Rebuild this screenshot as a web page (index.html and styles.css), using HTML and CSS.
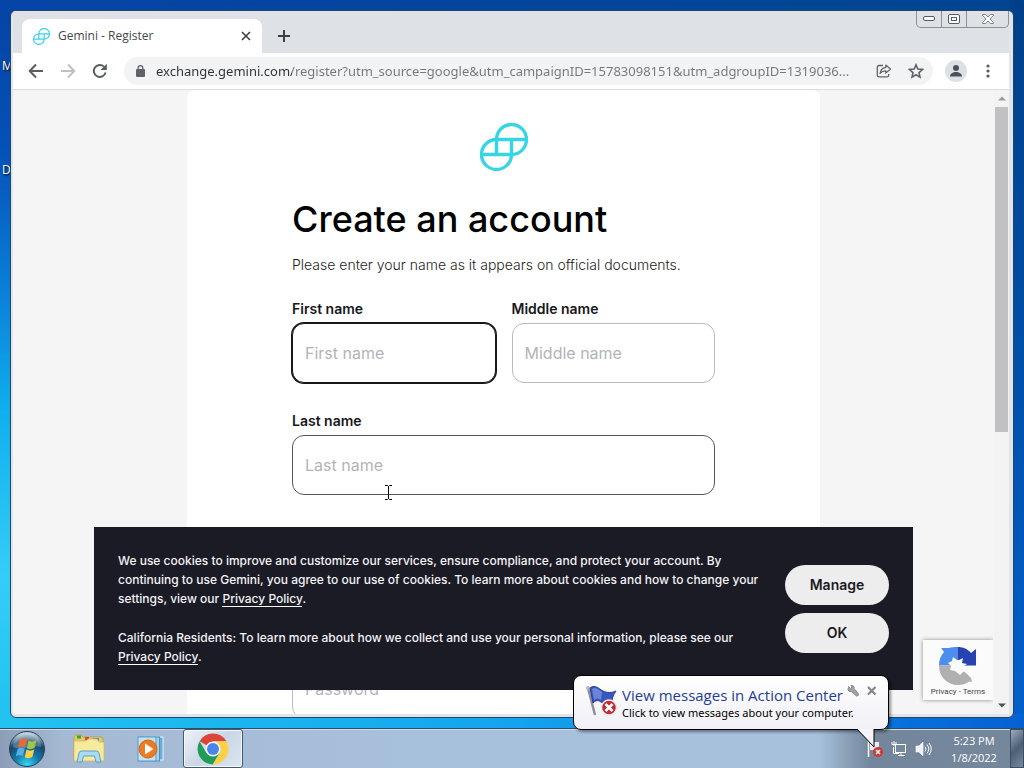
FILE: index.html
```html
<!DOCTYPE html>
<html lang="en">
<head>
<meta charset="utf-8">
<title>Gemini - Register</title>
<link rel="stylesheet" href="styles.css">
</head>
<body>
<div class="desktop">
  <span class="shortcut shortcut-first">M</span>
  <span class="shortcut shortcut-second">D</span>

  <div class="window">
    <header class="tabstrip">
      <div class="tab">
        <svg class="favicon" viewBox="0 0 48 48" aria-hidden="true"><use href="#gemini-mark"/></svg>
        <span class="tab-title">Gemini - Register</span>
        <button class="icon-button" aria-label="Close tab"><svg width="10" height="10" viewBox="0 0 10 10"><path d="M1 1l8 8M9 1l-8 8" stroke="#3c4043" stroke-width="1.6"/></svg></button>
      </div>
      <button class="icon-button new-tab" aria-label="New tab"><svg width="12" height="12" viewBox="0 0 12 12"><path d="M6 0v12M0 6h12" stroke="#3c4043" stroke-width="2"/></svg></button>
      <div class="window-controls">
        <button aria-label="Minimize"><svg width="13" height="6" viewBox="0 0 13 6"><rect x=".5" y=".5" width="11" height="4" rx="1.5" fill="#fff" stroke="#555b66"/></svg></button>
        <button aria-label="Restore"><svg width="12" height="10" viewBox="0 0 12 10"><rect x=".5" y=".5" width="11" height="9" rx="1.5" fill="#fff" stroke="#555b66"/><rect x="3.5" y="3.5" width="5" height="3" fill="#fff" stroke="#555b66"/></svg></button>
        <button class="close" aria-label="Close"><svg width="12" height="10" viewBox="0 0 12 10"><path d="M.7.5h3L6 3 8.300.5h3v1L8 5l3.300 3.500v1h-3L6 7 3.700 9.500h-3v-1L4 5 .7 1.500z" fill="#fff" stroke="#6b707a" stroke-width=".9"/></svg></button>
      </div>
    </header>

    <nav class="toolbar">
      <button class="icon-button" aria-label="Back"><svg width="16" height="16" viewBox="0 0 16 16"><path d="M15 8H2M8 1.500L1.700 8 8 14.500" fill="none" stroke="#5a5d61" stroke-width="2"/></svg></button>
      <button class="icon-button" aria-label="Forward"><svg width="16" height="16" viewBox="0 0 16 16"><path d="M1 8h13M8 1.500L14.300 8 8 14.500" fill="none" stroke="#bfc1c4" stroke-width="2"/></svg></button>
      <button class="icon-button" aria-label="Reload"><svg width="16" height="16" viewBox="0 0 16 16"><path d="M13.600 9.500A6 6 0 1 1 12 3.600" fill="none" stroke="#5a5d61" stroke-width="2"/><path d="M14.800.8V7H8.600z" fill="#5a5d61"/></svg></button>
      <div class="omnibox">
        <svg class="lock" width="10" height="12" viewBox="0 0 10 12" aria-hidden="true"><rect x="1" y="4" width="9" height="8" rx="1" fill="#5f6368"/><path d="M3.200 5V3a2.300 2.300 0 0 1 4.600 0v2" fill="none" stroke="#5f6368" stroke-width="1.3"/></svg>
        <input class="url" type="text" aria-label="Address" value="exchange.gemini.com/register?utm_source=google&amp;utm_campaignID=15783098151&amp;utm_adgroupID=1319036...">
        <button class="icon-button" aria-label="Share"><svg width="16" height="14" viewBox="0 0 16 14"><path d="M7 1.500H3A1.700 1.700 0 0 0 1.300 3.200v8A1.700 1.700 0 0 0 3 12.900h8a1.700 1.700 0 0 0 1.700-1.700V10" fill="none" stroke="#5f6368" stroke-width="1.3"/><path d="M9.800 1l4.700 4-4.700 4V6.800C7.300 6.700 5.500 7.500 4 9.500c.5-3 2.300-5.500 5.800-6.100z" fill="none" stroke="#5f6368" stroke-width="1.2" stroke-linejoin="round"/></svg></button>
        <button class="icon-button" aria-label="Bookmark"><svg width="16" height="16" viewBox="0 0 16 16"><path d="M8 1.800l1.800 4.300 4.700.4-3.500 3.100 1 4.600L8 11.800l-4 2.400 1-4.600-3.500-3.100 4.700-.4z" fill="none" stroke="#5f6368" stroke-width="1.6"/></svg></button>
      </div>
      <button class="icon-button profile" aria-label="Profile"><svg width="22" height="22" viewBox="0 0 22 22"><circle cx="11" cy="11" r="11" fill="#dde1e6"/><circle cx="11" cy="8" r="3" fill="#4a5059"/><path d="M5 16.500c0-3 3-4.500 6-4.500s6 1.500 6 4.500z" fill="#4a5059"/></svg></button>
      <button class="icon-button" aria-label="Menu"><svg width="4" height="14" viewBox="0 0 4 14" fill="#55585c"><circle cx="2" cy="2" r="1.6"/><circle cx="2" cy="7" r="1.6"/><circle cx="2" cy="12" r="1.6"/></svg></button>
    </nav>

    <div class="viewport">
      <main class="page">
        <form class="card">
          <svg class="logo" viewBox="0 0 48 48" role="img" aria-label="Gemini">
            <g id="gemini-mark" fill="none" stroke="#36d5e6" stroke-width="3.4">
              <path d="M16.500 16.500A15 15 0 1 1 31.500 31.500H1.500M16.500 16.500A15 15 0 1 0 31.500 31.500M16.500 31.500V16.500H46.500M31.500 16.500V31.500"/>
            </g>
          </svg>
          <h1>Create an account</h1>
          <p class="lead">Please enter your name as it appears on official documents.</p>
          <div class="row">
            <label class="field"><span>First name</span><input class="active" type="text" placeholder="First name"></label>
            <label class="field"><span>Middle name</span><input class="optional" type="text" placeholder="Middle name"></label>
          </div>
          <label class="field"><span>Last name</span><input type="text" placeholder="Last name"></label>
          <div class="field password"><input class="optional" type="password" placeholder="Password" aria-label="Password"></div>
        </form>
      </main>

      <aside class="cookies">
        <div class="cookies-text">
          <p>We use cookies to improve and customize our services, ensure compliance, and protect your account. By continuing to use Gemini, you agree to our use of cookies. To learn more about cookies and how to change your settings, view our <a href="#">Privacy Policy</a>.</p>
          <p>California Residents: To learn more about how we collect and use your personal information, please see our <a href="#">Privacy Policy</a>.</p>
        </div>
        <div class="cookies-actions">
          <button>Manage</button>
          <button>OK</button>
        </div>
      </aside>

      <div class="recaptcha">
        <svg width="38" height="38" viewBox="0 0 38 38" aria-hidden="true">
          <path d="M18.500 0v18.500H0C0 13 1.500 9 5 5L2 1h8C12.500.3 15 0 18.500 0z" fill="#4c8df0"/>
          <path d="M18.500 0c6 0 10 2 13.500 6l5-4v16.500H18.500z" fill="#2643b0"/>
          <path d="M0 18.500h18.500L28 27l4 4 1 4-3-.5C27 37 23 38 19 38 8 38 0 30 0 18.500z" fill="#b0b0b0"/>
          <path d="M18 13l-4-3-1 4-4 2 3 3-1 4 5 1 5 4 3-3 4-1-3-5 3-2-5-1 1-5-4 2z" fill="#fbfbfb"/>
        </svg>
        <div class="recaptcha-links"><a href="#">Privacy</a> - <a href="#">Terms</a></div>
      </div>

      <div class="scrollbar">
        <svg width="8" height="5" viewBox="0 0 8 5" aria-hidden="true"><path d="M0 4.500h8L4 .5z" fill="#9a9a9a"/></svg>
        <div class="track"><div class="thumb"></div></div>
        <svg width="8" height="5" viewBox="0 0 8 5" aria-hidden="true"><path d="M0 .5h8L4 4.500z" fill="#505050"/></svg>
      </div>
    </div>
  </div>

  <footer class="taskbar">
    <button class="start" aria-label="Start"><svg width="38" height="38" viewBox="0 0 38 38">
      <defs><radialGradient id="orb" cx=".5" cy=".95" r=".9"><stop offset="0" stop-color="#35d8f5"/><stop offset=".4" stop-color="#1478a8"/><stop offset=".75" stop-color="#1c4468"/><stop offset="1" stop-color="#b8cad8"/></radialGradient></defs>
      <circle cx="19" cy="19" r="17.5" fill="url(#orb)" stroke="#20435f"/>
      <path d="M5 17a14 14 0 0 1 28 0c-8-3-18 4-28 0z" fill="#fff" opacity=".25"/>
      <path d="M12 10c3-2 5-2 7-.5l-2 8c-2-1.500-4-1.500-7 0z" fill="#ec6a30"/>
      <path d="M20.500 10.500c2.500 1.500 5 1.500 8-.5l-2 8c-3 1.500-5 1.500-7.500.2z" fill="#9cc748"/>
      <path d="M9.700 19c3-2 5-1.500 7-.2l-2 7.500c-2-1.500-4-1.500-7 .2z" fill="#55aee8"/>
      <path d="M18.500 19.500c2.500 1.500 5 1.500 7.800 0l-2 7.500c-2.800 1.500-5 1.500-7.500.2z" fill="#fbd044"/>
    </svg></button>
    <button class="task" aria-label="Windows Explorer"><svg width="34" height="30" viewBox="0 0 34 30">
      <path d="M2 3l2-2h5l2 2h19l1 2v21H2z" fill="#e4c968" stroke="#b99b45" stroke-width=".8"/>
      <path d="M5 1.500h4v3H5z" fill="#36a445"/><path d="M13 3h4v3h-4z" fill="#d04b3b"/><path d="M21 4h6v3h-6z" fill="#4e9bd8"/>
      <path d="M2 7h12l2-2h9l2 3h5v19H2z" fill="#f8ea9d" stroke="#cfb55a" stroke-width=".7"/>
      <path d="M5 28l2-9q.5-2 2.500-2h15q2 0 2.500 2l2 9h-5l-1.500-6h-11L10 28z" fill="#a9dcf3" stroke="#5b9fc5"/>
    </svg></button>
    <button class="task" aria-label="Media Player"><svg width="28" height="26" viewBox="0 0 28 26">
      <rect x="6" y="1" width="20" height="23" fill="#6aaed5" stroke="#e3f3fb"/><rect x="3.5" y="1" width="19" height="24" fill="#a6d5ec" stroke="#4c91bd"/><rect x="1" y="1" width="18" height="24" fill="#c2e2f1" stroke="#5a9dc4"/>
      <circle cx="11" cy="13" r="9" fill="#ee7b22" stroke="#cf651b"/><path d="M8 7.500v11l8.500-5.500z" fill="#fff"/>
    </svg></button>
    <button class="task running" aria-label="Google Chrome"><svg width="32" height="32" viewBox="0 0 32 32">
      <path d="M16 16L2.600 8.300A15.400 15.400 0 0 1 29.400 8.300H16z" fill="#dc4437"/>
      <path d="M16 16L29.400 8.300A15.400 15.400 0 0 1 15.700 31.400l6.900-11.600z" fill="#fdd049"/>
      <path d="M16 16l6.600 3.800-6.900 11.600A15.400 15.400 0 0 1 2.600 8.300l6.800 11.500z" fill="#1f9d58"/>
      <path d="M16 8.300H29.400L22 16z" fill="#fdd049"/>
      <circle cx="16" cy="16" r="7.6" fill="#f4f4f4"/><circle cx="16" cy="16" r="6" fill="#4a86ea"/>
    </svg></button>
    <div class="tray">
      <svg class="tray-flag" width="16" height="18" viewBox="0 0 16 18" role="img" aria-label="Action Center"><path d="M1.500 1v16" stroke="#fff" stroke-width="1.5"/><path d="M3 2h9v8H3z" fill="#e9edf2"/><circle cx="11" cy="12" r="5" fill="#cf3b33"/><path d="M9 10l4 4M13 10l-4 4" stroke="#fff" stroke-width="1.5"/></svg>
      <svg width="16" height="16" viewBox="0 0 16 16" role="img" aria-label="Network"><rect x="4.5" y="3.5" width="10" height="8" fill="#76889c" stroke="#fff"/><path d="M7 14.500h7M10 12v2M2.500 6v6.500H8" stroke="#fff" fill="none"/><path d="M1 1v2.500h4V1M3 0v5" stroke="#fff" fill="none"/></svg>
      <svg width="17" height="16" viewBox="0 0 17 16" role="img" aria-label="Volume"><path d="M1 5h3l4-4v14l-4-4H1z" fill="#eef2f6" stroke="#fff" stroke-width=".6"/><path d="M10 5.500q2 2.500 0 5M12 3.500q3.500 4.500 0 9M14 2q4.500 6 0 12" fill="none" stroke="#fff"/></svg>
      <div class="clock"><span>5:23 PM</span><span>1/8/2022</span></div>
      <button class="show-desktop" aria-label="Show desktop"></button>
    </div>
  </footer>

  <div class="balloon" role="status">
    <svg class="balloon-icon" width="34" height="34" viewBox="0 0 34 34" aria-hidden="true">
      <path d="M3 3l7 27" stroke="#8c9098" stroke-width="2.5"/><circle cx="3" cy="3" r="2" fill="#b4b7bd"/>
      <path d="M5 3c5-4 9 1 13 3s9 2 13 0c-2 3-4 6-4 12-5 2-8 1-11-1s-5-2-8 1z" fill="#3a57c0" stroke="#243a8f"/>
      <path d="M7 4c4-3 7 1 10 3l-1 8c-3-2-5-2-7 0z" fill="#8ba3e8" opacity=".6"/>
      <circle cx="24" cy="22.5" r="7.5" fill="#c22d33" stroke="#eee" stroke-width="1.4"/><path d="M20.500 19l7 7M27.500 19l-7 7" stroke="#fff" stroke-width="2.6"/>
    </svg>
    <div class="balloon-body">
      <div class="balloon-head">
        <a class="balloon-title" href="#">View messages in Action Center</a>
        <button class="icon-button" aria-label="Options"><svg width="12" height="12" viewBox="0 0 12 12"><path d="M1 1.500l2.500 2L5 2 4 .5c2-.5 3.500 1 3 3L11.500 9q.3 2-2 2L4.500 6.500C2.500 7 .5 5.500 1 3.500" fill="#a2a2a2" stroke="#878787"/></svg></button>
        <button class="icon-button dismiss" aria-label="Close message"><svg width="10" height="10" viewBox="0 0 10 10"><path d="M1 1l7.500 7.500M8.500 1L1 8.500" stroke="#858585" stroke-width="2.2"/></svg></button>
      </div>
      <p>Click to view messages about your computer.</p>
    </div>
    <svg class="balloon-tail" width="20" height="20" viewBox="0 0 20 20" aria-hidden="true"><path d="M1 0l17 18V0" fill="#f4f4f8" stroke="#000"/></svg>
  </div>

  <svg class="cursor" width="9" height="17" viewBox="0 0 9 17" aria-hidden="true"><path d="M1 1.500h2.500l1 1 1-1H8M1 15.500h2.500l1-1 1 1H8M4.500 2v13" fill="none" stroke="#000"/></svg>
</div>
</body>
</html>
```

FILE: styles.css
```css
* { box-sizing: border-box; }

body {
  margin: 0;
  font-family: "Open Sans", "Noto Sans", sans-serif;
}

button { font: inherit; cursor: default; }

.desktop {
  position: relative;
  height: 100vh;
  display: flex;
  flex-direction: column;
  overflow: hidden;
  background:
    linear-gradient(90deg, #22c3f1, #14a4ee 50%, #0560d4) bottom / 100% 54px no-repeat,
    linear-gradient(180deg, #003f88, #0062cf) right / 14px 100% no-repeat,
    linear-gradient(90deg, #0545a8, #004590) top / 100% 14px no-repeat,
    linear-gradient(180deg, #0643a3 0%, #0552b8 20%, #0a80d8 38%, #10b0ee 54%, #35cdf7 75%, #22c3f1 92%);
}

.shortcut {
  position: absolute;
  left: 2px;
  color: #fff;
  font-size: 12px;
  line-height: 16px;
  text-shadow: 1px 1px 2px #000;
}
.shortcut-first { top: 58px; }
.shortcut-second { top: 162px; }

/* Browser window */
.window {
  position: relative;
  flex: 1;
  min-height: 0;
  margin: 10px;
  display: flex;
  flex-direction: column;
  border: 1px solid #1d4668;
  border-radius: 6px;
  background: #e2e4ec;
  padding: 0 4px 3px 2px;
  overflow: hidden;
}

.icon-button {
  display: flex;
  align-items: center;
  justify-content: center;
  flex: none;
  padding: 0;
  border: 0;
  background: none;
}

.tabstrip {
  display: flex;
  align-items: center;
  height: 42px;
  padding: 8px 0 0 9px;
  background: #dee1e6;
}
.tab {
  display: flex;
  align-items: center;
  gap: 8px;
  width: 240px;
  height: 34px;
  padding: 0 11px;
  border-radius: 8px 8px 0 0;
  background: #fff;
}
.favicon { width: 17px; height: 17px; }
.tab-title { flex: 1; font-size: 12px; line-height: 16px; color: #45484c; }
.new-tab { margin-left: 16px; }
.window-controls {
  display: flex;
  align-self: flex-start;
  margin: -8px 0 0 auto;
  border: 1px solid #8d9198;
  border-top: 0;
  border-radius: 0 0 5px 5px;
}
.window-controls button {
  display: flex;
  align-items: center;
  justify-content: center;
  width: 25px;
  height: 16px;
  padding: 0;
  border: 0;
  border-right: 1px solid #8d9198;
  background: none;
}
.window-controls .close { width: 41px; border-right: 0; }

.toolbar {
  display: flex;
  align-items: center;
  gap: 16px;
  height: 37px;
  padding: 0 19px 0 15px;
  border-bottom: 1px solid #dcdddf;
  background: #fff;
}
.omnibox {
  flex: 1;
  min-width: 0;
  display: flex;
  align-items: center;
  gap: 16px;
  height: 28px;
  padding: 0 9px 0 11px;
  border-radius: 14px;
  background: #f1f3f4;
}
.lock { flex: none; margin-right: -5px; }
.url {
  flex: 1;
  min-width: 0;
  padding: 0;
  border: 0;
  font: 13px/20px "Noto Sans", "Open Sans", sans-serif;
  text-overflow: ellipsis;
  color: transparent;
  background: linear-gradient(90deg, #303236 136px, #74777b 136px);
  -webkit-background-clip: text;
  background-clip: text;
  outline: 0;
}
.profile { margin: 0 3px 0 -4px; }

.viewport {
  position: relative;
  flex: 1;
  min-height: 0;
  display: flex;
  overflow: hidden;
}
.page {
  flex: 1;
  min-width: 0;
  overflow: hidden;
  background: #f5f5f5;
  font-family: Inter, sans-serif;
}
.card {
  max-width: 633px;
  margin: 0 auto;
  padding: 33px 105px;
  border-radius: 8px 8px 0 0;
  background: #fff;
}
.logo { display: block; width: 48px; height: 48px; margin: 0 auto; }
h1 {
  margin: 24px 0 0;
  font-size: 36px;
  line-height: 48px;
  font-weight: 550;
  font-optical-sizing: none;
  color: #000;
}
.lead { margin: 12px 0 24px; font-size: 14px; line-height: 20px; font-weight: 300; color: #1c1e22; }
.row { display: grid; grid-template-columns: 1fr 1fr; gap: 16px; }
.field { display: block; margin-bottom: 28px; }
.row .field { min-width: 0; }
.field span {
  display: block;
  margin-bottom: 4px;
  font-size: 14px;
  line-height: 20px;
  font-weight: 600;
  color: #17181c;
}
.field input {
  display: block;
  width: 100%;
  height: 60px;
  padding: 0 12px;
  border: 1px solid #55565a;
  border-radius: 12px;
  background: #fff;
  font: 16px/24px Inter, sans-serif;
  outline: 0;
}
.field .optional { border-color: #b9babd; }
.field .active { border-color: #16171b; box-shadow: 0 0 0 1px #16171b; }
.field input::placeholder { color: #b3b4b7; }
.password { margin-top: 164px; }

.cookies {
  position: absolute;
  left: 81px;
  right: 96px;
  bottom: 24px;
  display: flex;
  align-items: center;
  justify-content: space-between;
  gap: 16px;
  padding: 24px;
  background: #1b1b26;
  color: #f3f3f5;
  font-family: Inter, sans-serif;
  font-size: 12px;
  line-height: 19px;
  font-weight: 500;
}
.cookies-text { flex: 1; display: grid; gap: 20px; }
.cookies p { margin: 0; }
.cookies a { color: inherit; text-decoration: none; border-bottom: 1px solid #fff; }
.cookies-actions { display: grid; gap: 8px; width: 104px; }
.cookies-actions button {
  height: 40px;
  padding: 0;
  border: 0;
  border-radius: 20px;
  background: #ededed;
  color: #1b1b1f;
  font-size: 14px;
  font-weight: 600;
}

.recaptcha {
  position: absolute;
  right: 16px;
  bottom: 14px;
  width: 70px;
  height: 60px;
  padding-top: 7px;
  background: #fbfbfb;
  box-shadow: 0 0 4px #888;
  clip-path: inset(-6px 0 -6px -6px);
  text-align: center;
}
.recaptcha svg { display: block; margin: 0 auto; }
.recaptcha-links { font: 8px/14px Roboto, sans-serif; color: #444; }
.recaptcha a { color: inherit; text-decoration: none; }

.scrollbar {
  display: flex;
  flex-direction: column;
  align-items: center;
  gap: 6px;
  width: 15px;
  padding: 6px 1px;
  background: #f3f3f4;
}
.track { flex: 1; align-self: stretch; }
.thumb { height: 55%; background: #c1c1c3; }

/* Taskbar */
.taskbar {
  display: flex;
  align-items: center;
  height: 40px;
  border-top: 1px solid #2b4f6b;
  box-shadow: inset 0 1px #cfdcea;
  background: linear-gradient(90deg, #8b9db7 0, #a5b9d3 6%, #a7c0dc 40%, #a7c0dc 80%, #73869c 85%, #75879a 100%);
}
.start, .task {
  display: flex;
  align-items: center;
  justify-content: center;
  align-self: stretch;
  width: 60px;
  padding: 0;
  border: 0;
  background: none;
}
.start { width: 54px; margin-right: 5px; }
.task { margin-right: 2px; }
.running {
  border: 1px solid #44596e;
  border-radius: 3px;
  background: linear-gradient(135deg, #f0f3f8, #c9d6e6 50%, #dbe6f0);
  box-shadow: inset 0 0 0 1px #f5f8fb;
}
.tray {
  display: flex;
  align-items: center;
  align-self: stretch;
  gap: 8px;
  margin-left: auto;
  color: #fff;
}
.clock {
  display: grid;
  width: 64px;
  margin: 0 -4px 0 2px;
  text-align: center;
  font-size: 11px;
  line-height: 17px;
}
.show-desktop {
  align-self: stretch;
  width: 14px;
  padding: 0;
  border: 1px solid #3d4e60;
  background: linear-gradient(135deg, #9eabba, #4b5f76 50%, #78899c);
}

/* Notification balloon */
.balloon {
  position: absolute;
  right: 135px;
  bottom: 38px;
  width: 316px;
  height: 55px;
  display: flex;
  gap: 3px;
  padding: 9px 8px 4px 11px;
  border: 1px solid #000;
  border-radius: 8px;
  background: linear-gradient(#fff, #f0f0f6);
  box-shadow: 2px 2px 3px #0006;
}
.balloon-icon { flex: none; }
.balloon-body { flex: 1; min-width: 0; white-space: nowrap; }
.balloon-head { display: flex; align-items: flex-start; gap: 4px; }
.balloon-title { font-size: 15px; line-height: 20px; color: #1f3f94; text-decoration: none; }
.dismiss { margin: 1px 0 0 4px; }
.balloon p { margin: 0; font: 11px/16px "Noto Sans", "Open Sans", sans-serif; color: #000; }
.balloon-tail { position: absolute; right: 12px; top: 53px; }

.cursor { position: absolute; left: 384px; top: 484px; }
```
